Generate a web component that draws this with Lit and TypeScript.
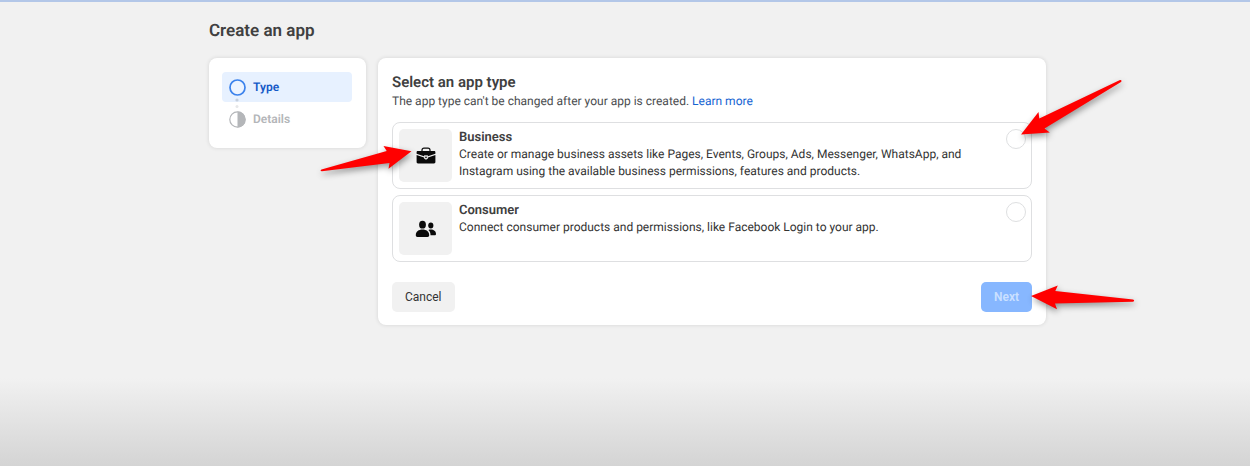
import { LitElement, html, css, svg } from "lit";
import { customElement, state } from "lit/decorators.js";

const briefcase = svg`
  <svg width="20" height="18" viewBox="0 0 20 18" aria-hidden="true">
    <path d="M6 4.5V3.2C6 2 6.8 1.2 8 1.2h4c1.2 0 2 .8 2 2v1.3" fill="none" stroke="#0a0a0a" stroke-width="1.2"/>
    <path d="M2 4h16c.9 0 1.4.5 1.4 1.4v1.400L12 9.300V8.600H8v.7L.6 6.800V5.400C.6 4.500 1.100 4 2 4z" fill="#0a0a0a"/>
    <path d="M.6 7.900 8 10.400c.2 1.200.9 1.900 2 1.900s1.800-.7 2-1.900l7.400-2.500V15.100c0 .9-.5 1.400-1.400 1.400H2c-.9 0-1.400-.5-1.400-1.400z" fill="#0a0a0a"/>
    <path d="M9.200 9.400h1.600v1c0 .5-.3.800-.8.800s-.8-.3-.8-.8z" fill="#0a0a0a"/>
    <path d="M8.500 9v1.600c0 .8.600 1.300 1.500 1.300s1.500-.5 1.500-1.300V9z" fill="none" stroke="#d8d8d8" stroke-width=".8"/>
  </svg>`;

const people = svg`
  <svg width="22" height="18" viewBox="0 0 22 18" aria-hidden="true" fill="#0a0a0a">
    <ellipse cx="7.500" cy="4.700" rx="3.400" ry="3.900"/>
    <path d="M.8 15.200C.8 11.700 3.700 9.600 7.500 9.600s6.700 2.100 6.700 5.600c0 1.100-.6 1.700-1.700 1.700h-10c-1.100 0-1.700-.6-1.700-1.700z"/>
    <ellipse cx="15.800" cy="5.500" rx="2.600" ry="2.900"/>
    <path d="M15.500 15.300h4.100c.9 0 1.400-.5 1.400-1.400 0-2.700-2.300-4.400-5.200-4.400-.9 0-1.700.1-2.400.5 1.500 1.300 2.200 3.100 2.100 5.300z"/>
  </svg>`;

const options = [
  {
    id: "business",
    title: "Business",
    text: "Create or manage business assets like Pages, Events, Groups, Ads, Messenger, WhatsApp, and Instagram using the available business permissions, features and products.",
    icon: briefcase,
  },
  {
    id: "consumer",
    title: "Consumer",
    text: "Connect consumer products and permissions, like Facebook Login to your app.",
    icon: people,
  },
];

@customElement("app-root")
export class AppRoot extends LitElement {
  @state() private selected = "";

  static styles = css`
    :host {
      display: block;
      box-sizing: border-box;
      min-height: 100vh;
      border-top: 2px solid #b3c7e8;
      padding: 18px 13px 0 18px;
      background: linear-gradient(to top, #d4d4d4, #f1f1f1 88px);
      color: #333;
      font: 12px/17px Roboto, "Liberation Sans", sans-serif;
      text-rendering: geometricPrecision;
    }
    * { box-sizing: border-box; }
    h1, h2, h3, p, ol { margin: 0; padding: 0; }
    .page { max-width: 837px; margin: 0 auto; }
    h1 { font-size: 17px; line-height: 22px; font-weight: 600; color: #404040; }
    .columns { display: flex; align-items: flex-start; gap: 12px; margin-top: 16px; }
    .card { background: #fff; border-radius: 8px; box-shadow: 0 0 4px rgba(0, 0, 0, 0.12); }
    .steps { flex: 0 0 157px; padding: 14px 14px 14px 13px; list-style: none; }
    .step {
      display: flex;
      align-items: center;
      gap: 7px;
      height: 30px;
      padding-left: 7px;
      border-radius: 4px;
      color: #b4b6b9;
      font-weight: 600;
    }
    .step + .step { margin-top: 2px; }
    .step.current { background: #e7f1ff; color: #1459c7; position: relative; }
    .step svg { display: block; }
    .dots { position: absolute; left: 13px; top: 26px; }
    .main { flex: 1; min-width: 0; padding: 14px 14px 13px; }
    h2 { font-size: 15px; line-height: 20px; font-weight: 600; color: #404040; }
    .sub { color: #4b4d50; line-height: 18px; }
    a { color: #1564d2; text-decoration: none; }
    .options { display: grid; gap: 6px; margin: 12px 0 20px; }
    .option {
      display: flex;
      align-items: flex-start;
      gap: 7px;
      padding: 6px 5px 6px 6px;
      border: 1px solid #dedfe1;
      border-radius: 8px;
      cursor: pointer;
    }
    .tile {
      position: relative;
      flex: 0 0 53px;
      height: 53px;
      display: grid;
      place-items: center;
      border-radius: 5px;
      background: #f1f1f1;
    }
    .copy { flex: 1; max-width: 512px; }
    h3 { font-size: 13px; line-height: 17px; font-weight: 600; color: #404040; }
    .pick { position: relative; display: block; margin-left: auto; }
    input {
      appearance: none;
      display: block;
      width: 20px;
      height: 20px;
      margin: 0;
      border: 1px solid #dedfe1;
      border-radius: 50%;
      background: #fff;
    }
    input:checked { border: 6px solid #1564d2; }
    .actions { display: flex; justify-content: space-between; }
    button {
      position: relative;
      height: 30px;
      padding: 0 13px;
      border: 0;
      border-radius: 5px;
      background: #f1f1f1;
      color: #333;
      font: inherit;
    }
    .next { background: #87b7ff; color: #cbe0ff; font-weight: 600; }
    .arrow { position: absolute; overflow: visible; pointer-events: none; filter: drop-shadow(1px 3px 3px rgba(0, 0, 0, 0.4)); z-index: 1; }
    .to-tile { right: 40px; top: 16px; }
    .to-pick { left: 14px; top: -50px; }
    .to-next { left: 49px; top: 2px; }
  `;

  render() {
    return html`
      <div class="page">
        <h1>Create an app</h1>
        <div class="columns">
          <ol class="card steps">
            <li class="step current" aria-current="step">
              <svg width="17" height="17" viewBox="0 0 17 17" aria-hidden="true">
                <circle cx="8.500" cy="8.500" r="7.500" fill="#edf4ff" stroke="#3b82ec" stroke-width="1.700"/>
              </svg>
              Type
              <svg class="dots" width="4" height="10" viewBox="0 0 4 10" aria-hidden="true">
                <circle cx="2" cy="2" r="1.600" fill="#c5cfdd"/>
                <circle cx="2" cy="8.500" r="1.500" fill="#e6e7e9"/>
              </svg>
            </li>
            <li class="step">
              <svg width="17" height="17" viewBox="0 0 17 17" aria-hidden="true">
                <circle cx="8.500" cy="8.500" r="7.700" fill="#fff" stroke="#b4b6b9" stroke-width="1.200"/>
                <path d="M8.500.500a8 8 0 0 1 0 16z" fill="#b4b6b9"/>
              </svg>
              Details
            </li>
          </ol>
          <main class="card main">
            <h2>Select an app type</h2>
            <p class="sub">The app type can't be changed after your app is created. <a href="#">Learn more</a></p>
            <div class="options" role="radiogroup" aria-label="App type">
              ${options.map((o) => html`
                <label class="option" for=${o.id}>
                  <span class="tile">
                    ${o.icon}
                    ${o.id === "business" ? html`
                      <svg class="arrow to-tile" width="92" height="26" viewBox="0 0 92 26" aria-hidden="true">
                        <path d="M91.500 6.300 63.500 1l3.200 5L1.500 24.500c-1.500.5-1 2 .5 1.800L69.500 18 68.500 23.800z" fill="#f00"/>
                      </svg>` : ""}
                  </span>
                  <div class="copy">
                    <h3>${o.title}</h3>
                    <p>${o.text}</p>
                  </div>
                  <span class="pick">
                    <input type="radio" name="type" id=${o.id} .checked=${this.selected === o.id}
                      @change=${() => (this.selected = o.id)} />
                    ${o.id === "business" ? html`
                      <svg class="arrow to-pick" width="102" height="56" viewBox="0 0 102 56" aria-hidden="true">
                        <path d="M1 55.500 18.500 33l.8 6.500L100 1c1.500-.5 2 1 1 2L24.500 49.500l5.300 4z" fill="#f00"/>
                      </svg>` : ""}
                  </span>
                </label>`)}
            </div>
            <div class="actions">
              <button type="button">Cancel</button>
              <button type="button" class="next" aria-disabled=${!this.selected}>Next
                <svg class="arrow to-next" width="104" height="26" viewBox="0 0 104 26" aria-hidden="true">
                  <path d="M1 12 27.800 1.500l-2.500 5.500L103 15.500c1.500.3 1.500 2 0 2.200L25 19.500l2 5.800z" fill="#f00"/>
                </svg>
              </button>
            </div>
          </main>
        </div>
      </div>`;
  }
}
